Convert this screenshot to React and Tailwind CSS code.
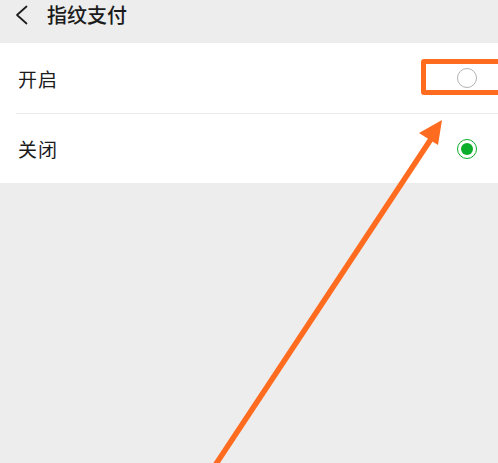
export default function App() {
  return (
    <div
      className="relative w-[498px] h-[463px] overflow-hidden bg-[#ededed] text-[#1b1b1b]"
      style={{ fontFamily: '"Noto Sans CJK SC", "Noto Sans", sans-serif' }}
    >
      {/* Header */}
      <header className="h-[43px] flex items-start pt-[3px]">
        <div className="flex items-center h-[24px] pl-[15px] gap-[19px]">
          <svg width="13" height="20" viewBox="0 0 13 20" fill="none">
            <path d="M11.5 1.5 L2 10 L11.5 18.5" stroke="#1b1b1b" strokeWidth="1.7" strokeLinecap="round" strokeLinejoin="round" />
          </svg>
          <span className="text-[20px] font-medium leading-none">指纹支付</span>
        </div>
      </header>

      {/* Options */}
      <div className="bg-white">
        <div className="h-[70px] flex items-center justify-between pl-[18px] pr-[21px]">
          <span className="text-[19px] leading-none tracking-[1px]">开启</span>
          <span className="w-[20px] h-[20px] rounded-full border-[1.5px] border-[#b2b2b2]" />
        </div>
        <div className="ml-[16px] h-px bg-[#ececec]" />
        <div className="h-[69px] flex items-center justify-between pl-[18px] pr-[21px]">
          <span className="text-[19px] leading-none tracking-[1px]">关闭</span>
          <span className="w-[20px] h-[20px] rounded-full border-[1.5px] border-[#0aae2a] flex items-center justify-center">
            <span className="w-[12px] h-[12px] rounded-full bg-[#0aae2a]" />
          </span>
        </div>
      </div>

      {/* Annotation box */}
      <div className="absolute left-[421px] top-[59px] w-[84px] h-[36px] border-[5px] border-[#ff6b1f] rounded-[3px]" />

      {/* Annotation arrow */}
      <svg className="absolute left-0 top-0" width="498" height="463" viewBox="0 0 498 463">
        <line x1="212" y1="470" x2="433" y2="136" stroke="#ff6b1f" strokeWidth="5.5" />
        <polygon points="442,120 419,133 438,145" fill="#ff6b1f" />
      </svg>
    </div>
  );
}
